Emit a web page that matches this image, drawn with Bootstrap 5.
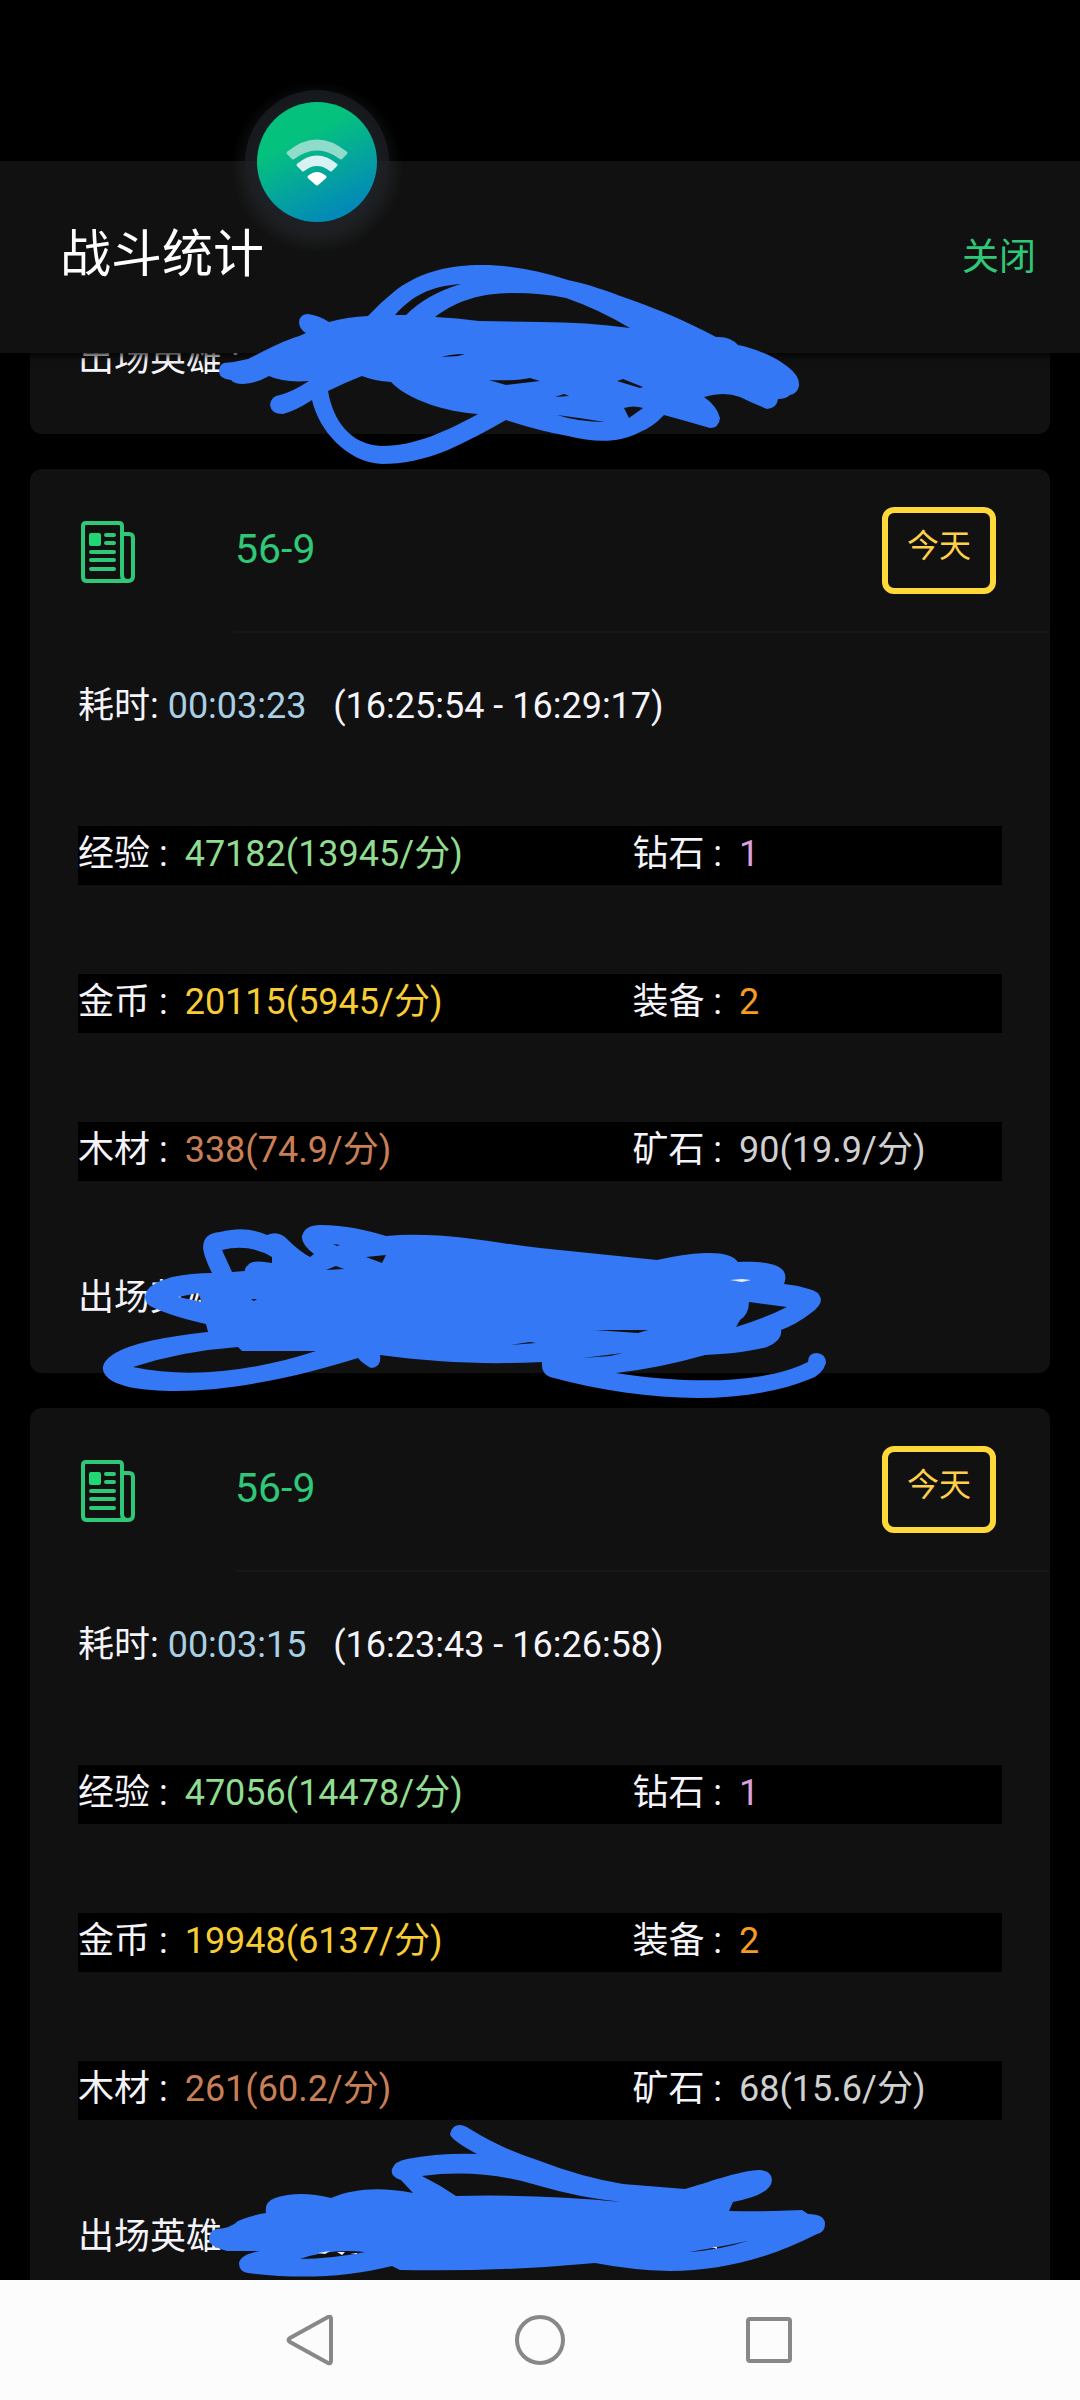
<!DOCTYPE html>
<html lang="zh-CN">
<head>
<meta charset="utf-8">
<meta name="viewport" content="width=device-width, initial-scale=1">
<title>战斗统计</title>
<link href="https://cdn.jsdelivr.net/npm/bootstrap@5.3.0/dist/css/bootstrap.min.css" rel="stylesheet">
<style>
  body { font-family: Roboto, "Noto Sans CJK SC", sans-serif; font-size: 36px; line-height: 57px; background: #000; color: #f4f4fa; }
  .app-head { height: 192px; margin-top: 161px; padding: 0 44px 4px 60px; background: #111; box-shadow: 0 2px 8px #000; z-index: 2; }
  .app-title { font-size: 51px; line-height: 64px; font-weight: 400; color: #fff; }
  .close-btn { padding: 4px 0 0; font-size: 37px; line-height: 53px; color: #2fc878; }
  .feed { gap: 35px; padding: 0 30px; }
  .battle { background: #111; border-radius: 12px; }
  .battle-cut { margin-top: -67px; }
  .battle-head { height: 164px; padding-left: 51px; }
  .battle-icon { width: 54px; height: 62px; margin-top: 2px; }
  .battle-title { margin-left: 100px; padding: 0 54px 6px 0; border-bottom: 2px solid #161616; }
  .stage { padding-top: 4px; font-size: 41px; line-height: 53px; font-weight: 400; color: #2fc878; }
  .day-tag { width: 114px; height: 87px; padding-bottom: 8px; margin-top: 6px; border: 6px solid #ffd83a; border-radius: 12px; font-size: 32px; line-height: 40px; color: #ffcf4a; }
  .line { height: 148px; padding: 0 48px; }
  .line-text { padding-bottom: 2px; white-space: pre; }
  .bar { background: #000; }
  .bar-main { flex: 0 0 60%; }
  .val { margin-left: 17px; }
  .c-time { color: #a9cfe4; } .c-exp { color: #90dc90; } .c-gem { color: #dda0dd; } .c-gold { color: #f8cc34; }
  .c-gear { color: #f59a23; } .c-wood { color: #c97f56; } .c-ore { color: #d0d0d0; }
  .sys-nav { height: 120px; background: #fcfcfc; gap: 178px; z-index: 4; }
  .sys-nav svg { width: 52px; height: 52px; fill: none; stroke: #888; stroke-width: 4; stroke-linejoin: round; }
  .float-wifi { left: 245px; top: 90px; width: 144px; height: 144px; z-index: 5; }
  .doodle { left: 0; top: 0; width: 1080px; height: 2400px; pointer-events: none; z-index: 3; fill: #3478f6; fill-rule: evenodd; }
</style>
<script src="https://cdn.jsdelivr.net/npm/bootstrap@5.3.0/dist/js/bootstrap.bundle.min.js"></script>
</head>
<body>
<svg class="d-none" aria-hidden="true">
  <symbol id="news" viewBox="0 0 54 62">
    <g fill="none" stroke="#2fc878" stroke-width="4" stroke-linejoin="round" stroke-linecap="round">
      <path d="M41 51V5q0-3-3-3H5Q2 2 2 5v51q0 4 4 4h41q5 0 5-5V17q0-4-4-4h-7M41 51v3q0 6 6 6"/>
      <path d="M25 14h8M25 22h8M10 31h23M10 39h23M10 48h23"/>
    </g>
    <rect x="8" y="12" width="12" height="13" rx="2" fill="#1fd873"/>
  </symbol>
</svg>
<div class="vh-100 d-flex flex-column overflow-hidden position-relative">
  <header class="app-head d-flex align-items-center justify-content-between flex-shrink-0 position-relative">
    <h1 class="app-title mb-0">战斗统计</h1>
    <button type="button" class="close-btn btn border-0">关闭</button>
  </header>

  <main class="feed d-flex flex-column flex-grow-1 overflow-hidden">
    <article class="battle battle-cut flex-shrink-0">
      <div class="line d-flex align-items-center"><div class="line-text">出场英雄 :</div></div>
    </article>

    <article class="battle flex-shrink-0">
      <div class="battle-head d-flex">
        <svg class="battle-icon align-self-center" aria-hidden="true"><use href="#news"/></svg>
        <div class="battle-title d-flex flex-grow-1 align-items-center justify-content-between">
          <h2 class="stage mb-0">56-9</h2>
          <span class="day-tag d-flex align-items-center justify-content-center">今天</span>
        </div>
      </div>
      <div class="line d-flex align-items-center"><div class="line-text">耗时: <span class="c-time">00:03:23</span>   (16:25:54 - 16:29:17)</div></div>
      <div class="line d-flex align-items-center"><div class="bar d-flex flex-grow-1">
        <div class="line-text bar-main">经验 :<span class="val c-exp">47182(13945/分)</span></div>
        <div class="line-text">钻石 :<span class="val c-gem">1</span></div>
      </div></div>
      <div class="line d-flex align-items-center"><div class="bar d-flex flex-grow-1">
        <div class="line-text bar-main">金币 :<span class="val c-gold">20115(5945/分)</span></div>
        <div class="line-text">装备 :<span class="val c-gear">2</span></div>
      </div></div>
      <div class="line d-flex align-items-center"><div class="bar d-flex flex-grow-1">
        <div class="line-text bar-main">木材 :<span class="val c-wood">338(74.9/分)</span></div>
        <div class="line-text">矿石 :<span class="val c-ore">90(19.9/分)</span></div>
      </div></div>
      <div class="line d-flex align-items-center"><div class="line-text">出场英雄 :</div></div>
    </article>

    <article class="battle flex-shrink-0">
      <div class="battle-head d-flex">
        <svg class="battle-icon align-self-center" aria-hidden="true"><use href="#news"/></svg>
        <div class="battle-title d-flex flex-grow-1 align-items-center justify-content-between">
          <h2 class="stage mb-0">56-9</h2>
          <span class="day-tag d-flex align-items-center justify-content-center">今天</span>
        </div>
      </div>
      <div class="line d-flex align-items-center"><div class="line-text">耗时: <span class="c-time">00:03:15</span>   (16:23:43 - 16:26:58)</div></div>
      <div class="line d-flex align-items-center"><div class="bar d-flex flex-grow-1">
        <div class="line-text bar-main">经验 :<span class="val c-exp">47056(14478/分)</span></div>
        <div class="line-text">钻石 :<span class="val c-gem">1</span></div>
      </div></div>
      <div class="line d-flex align-items-center"><div class="bar d-flex flex-grow-1">
        <div class="line-text bar-main">金币 :<span class="val c-gold">19948(6137/分)</span></div>
        <div class="line-text">装备 :<span class="val c-gear">2</span></div>
      </div></div>
      <div class="line d-flex align-items-center"><div class="bar d-flex flex-grow-1">
        <div class="line-text bar-main">木材 :<span class="val c-wood">261(60.2/分)</span></div>
        <div class="line-text">矿石 :<span class="val c-ore">68(15.6/分)</span></div>
      </div></div>
      <div class="line d-flex align-items-center"><div class="line-text">出场英雄 :</div></div>
    </article>
  </main>

  <nav class="sys-nav d-flex align-items-center justify-content-center flex-shrink-0 position-relative" aria-label="系统导航">
    <button type="button" class="btn p-0 border-0 d-flex" aria-label="返回"><svg viewBox="0 0 52 52"><path d="M45 3Q47 2 47 5V47Q47 50 44 49L6 28Q3 26 6 24L44 3Z"/></svg></button>
    <button type="button" class="btn p-0 border-0 d-flex" aria-label="主页"><svg viewBox="0 0 52 52"><circle cx="26" cy="26" r="23"/></svg></button>
    <button type="button" class="btn p-0 border-0 d-flex" aria-label="最近任务"><svg viewBox="0 0 52 52"><rect x="4" y="5" width="42" height="42" rx="2"/></svg></button>
  </nav>

  <svg class="doodle position-absolute" viewBox="0 0 1080 2400" aria-hidden="true">
    <path d="M219 371Q219 365 224 363Q236 362 248 359C262 352 277 344 293 338Q300 336 306 333Q299 329 299 322Q300 314 308 314Q318 315 329 322Q347 317 368 316Q381 302 396 290C422 271 450 265 482 265C512 265 540 271 568 280C588 284 607 291 626 298C658 309 688 322 716 337Q730 336 738 345C754 348 776 357 788 367Q800 376 799 386Q797 394 790 395Q786 399 778 399Q777 408 767 409Q752 403 740 397Q724 391 704 397Q717 406 720 418Q719 428 710 428Q686 421 664 415Q653 427 640 432C618 444 593 442 568 436Q540 431 506 420C487 431 468 441 448 450C423 460 403 464 382 464C346 462 319 430 312 400Q297 410 283 414Q271 414 270 405Q271 396 280 395Q292 392 309 381Q284 383 269 376Q257 383 243 384Q234 384 231 380Q219 379 219 371Z
      M435 317C459 299 484 293 513 293Q542 293 566 298Q598 309 630 328Q587 322 540 322L479 321Q457 318 435 317Z
      M395 315C412 296 430 286 461 284Q427 294 406 315Z
      M328 391Q344 383 362 376Q374 381 391 382C408 400 446 412 478 414C447 431 415 446 382 446C350 445 333 420 328 391Z
      M441 357Q452 354 465 354L458 356ZM489 380Q518 381 530 378L540 381L506 385ZM617 381L623 379L643 387L640 388ZM555 397L564 394L569 396ZM624 408Q634 405 643 408L629 418ZM557 415Q581 418 605 422Q579 422 557 415Z"/>
    <path d="M145 1297C146 1287 155 1282 172 1277Q192 1273 212 1273Q204 1257 203 1248Q203 1233 220 1232C240 1227 253 1229 267 1235Q279 1230 288 1240Q299 1251 310 1257L314 1254Q301 1244 302 1236Q305 1225 320 1225C346 1225 366 1230 386 1236C443 1231 493 1243 540 1248L657 1260Q683 1254 705 1253Q731 1252 738 1262C764 1261 792 1263 784 1284Q797 1285 809 1289Q819 1291 821 1299Q821 1306 811 1313Q797 1324 781 1330Q783 1340 767 1347C748 1352 727 1354 705 1355Q660 1368 616 1373C694 1385 766 1383 808 1362Q808 1353 817 1353Q826 1354 826 1363Q822 1375 810 1379C741 1407 643 1402 550 1377Q541 1374 542 1362C487 1365 431 1362 380 1355Q382 1367 371 1368Q362 1363 358 1358C307 1374 237 1391 176 1391C143 1391 107 1387 103 1370C102 1349 151 1338 208 1332L206 1324Q170 1316 150 1306Q145 1302 145 1297Z
      M222 1250Q249 1243 272 1257V1263Q252 1259 248 1265Q244 1268 245 1271L232 1272Z
      M133 1367Q182 1351 238 1347L242 1351L316 1351C255 1371 189 1379 133 1367Z
      M178 1297L198 1293L202 1302Q188 1299 178 1297ZM366 1257L386 1255L382 1263ZM326 1270L336 1266L344 1269ZM333 1244L340 1245L337 1246ZM251 1299L257 1299L254 1301ZM749 1302L787 1307Q763 1319 736 1327L740 1320Q749 1314 749 1302ZM595 1330H648L638 1333ZM510 1345L530 1342L536 1343ZM583 1358L623 1353L610 1356Z"/>
    <path d="M209 2240Q209 2230 217 2229Q231 2228 238 2221Q252 2215 266 2213Q264 2202 275 2198Q299 2190 331 2198C355 2188 381 2187 413 2193L401 2180Q390 2177 392 2169Q395 2161 407 2159Q438 2153 477 2154Q451 2140 450 2134Q452 2125 460 2125Q464 2125 470 2129Q502 2149 540 2161Q581 2177 623 2184L685 2189C707 2183 737 2171 760 2170Q772 2171 772 2180Q771 2195 733 2202L729 2211Q766 2212 802 2210L808 2214Q825 2214 825 2224Q825 2232 817 2234C771 2258 720 2271 670 2271Q631 2270 595 2263Q500 2272 400 2270L392 2266C345 2278 296 2279 248 2273Q239 2272 239 2263Q241 2254 260 2251L227 2251Q209 2246 209 2240Z
      M422 2176Q482 2168 540 2186Q577 2197 621 2202Q539 2194 456 2196Q440 2185 422 2176Z
      M300 2259Q331 2248 365 2252Q330 2259 300 2259ZM689 2252Q720 2247 747 2241Q720 2250 689 2252Z"/>
    <path fill="#eef" d="M318 2253L330 2251L325 2254ZM337 2252H345L342 2255ZM350 2253H357V2254ZM712 2247H717V2249ZM730 1280L742 1279L751 1280L742 1282Z"/>
  </svg>

  <button type="button" class="float-wifi btn p-0 border-0 position-absolute" aria-label="无线网络">
    <svg class="d-block overflow-visible" viewBox="0 0 144 144" aria-hidden="true">
      <defs>
        <linearGradient id="wg" x1=".3" y1=".1" x2=".75" y2="1"><stop offset=".2" stop-color="#05c17e"/><stop offset=".9" stop-color="#038ab8"/></linearGradient>
        <radialGradient id="halo"><stop offset=".68" stop-color="#8aa0b0" stop-opacity=".14"/><stop offset="1" stop-color="#8aa0b0" stop-opacity="0"/></radialGradient>
      </defs>
      <circle cx="72" cy="77" r="86" fill="url(#halo)"/>
      <circle cx="72" cy="72" r="72" fill="#1c2023" opacity=".7"/>
      <circle cx="72" cy="72" r="60" fill="url(#wg)"/>
      <g stroke-linejoin="round" stroke-width="3">
        <path d="M43 63Q72 39 101 63L96 68Q72 50 48 68Z" fill="#8fdccb" stroke="#8fdccb"/>
        <path d="M53 75Q72 59 91 75L86 80Q72 69 58 80Z" fill="#d8f1f3" stroke="#d8f1f3"/>
        <path d="M64 87Q72 80 80 87L72 94Z" fill="#fff" stroke="#fff"/>
      </g>
    </svg>
  </button>
</div>
</body>
</html>
